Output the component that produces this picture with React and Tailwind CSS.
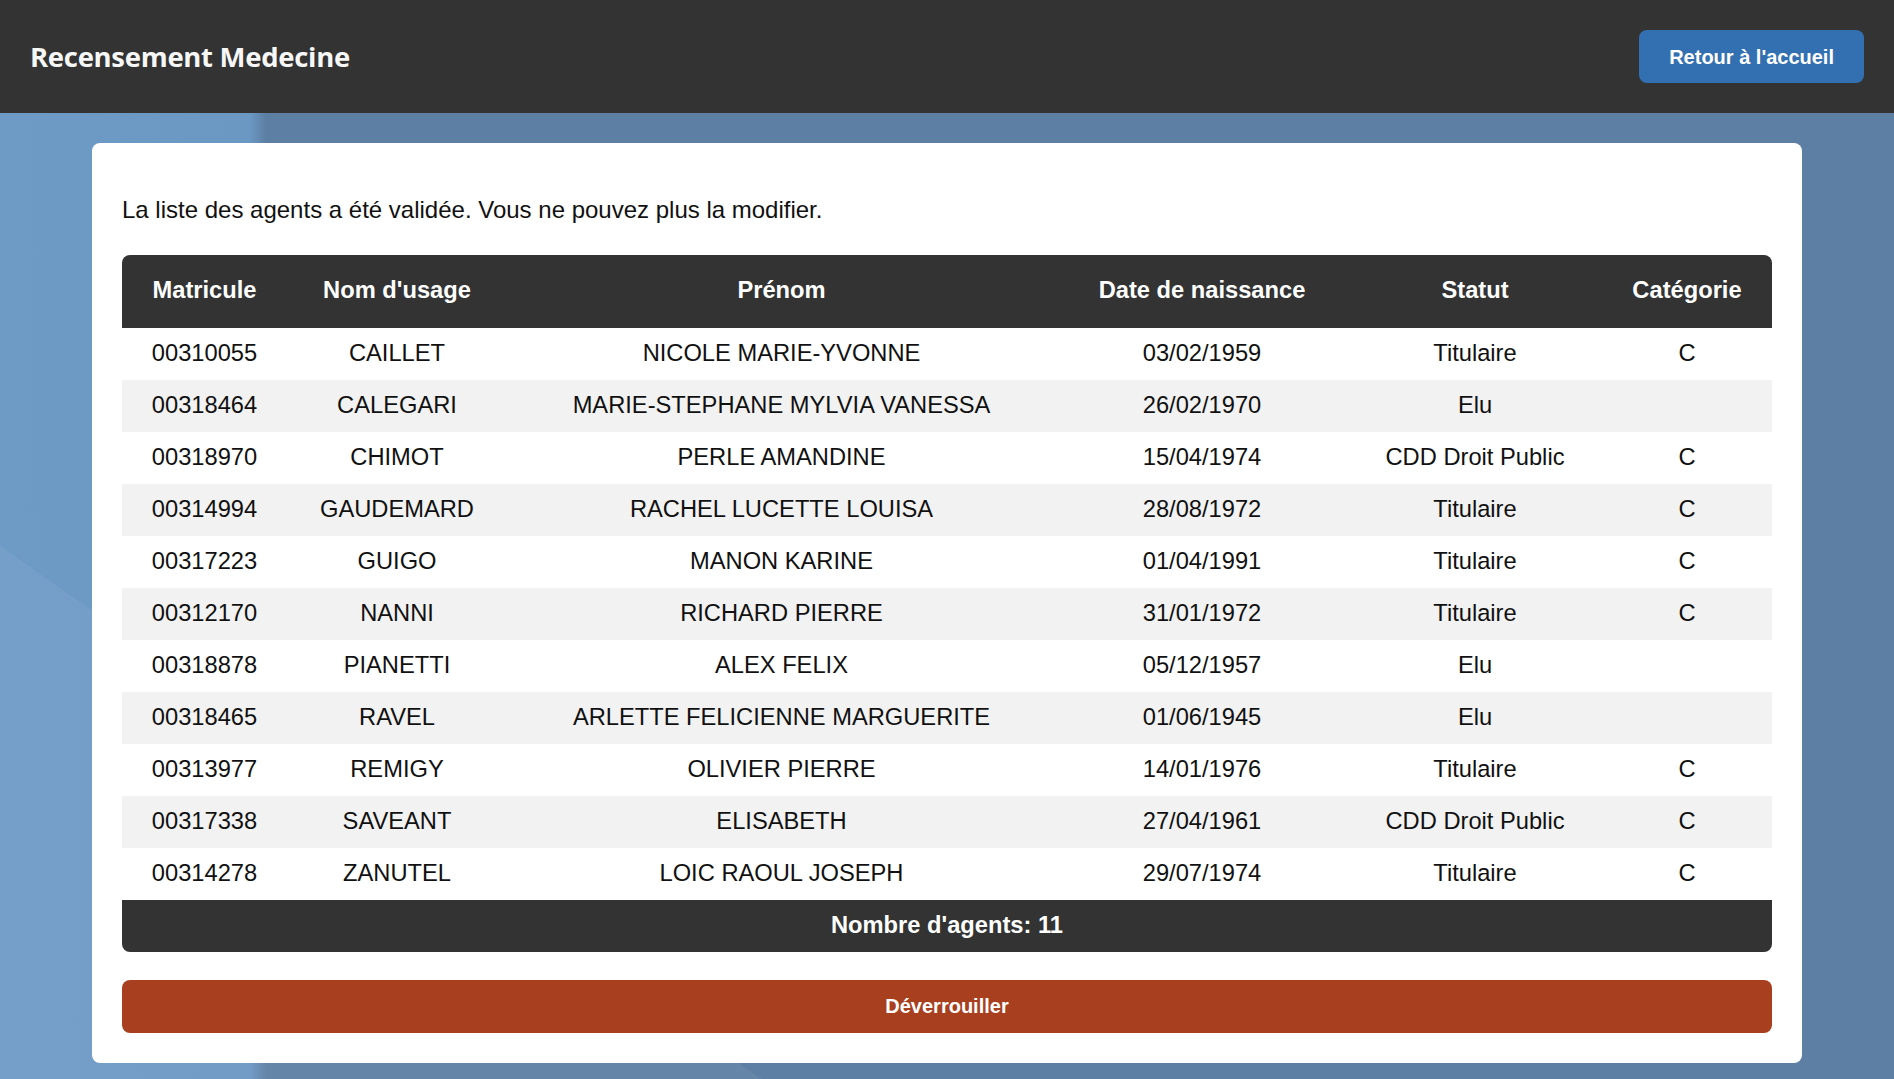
import React from 'react'

const agents = [
  ['00310055', 'CAILLET', 'NICOLE MARIE-YVONNE', '03/02/1959', 'Titulaire', 'C'],
  ['00318464', 'CALEGARI', 'MARIE-STEPHANE MYLVIA VANESSA', '26/02/1970', 'Elu', ''],
  ['00318970', 'CHIMOT', 'PERLE AMANDINE', '15/04/1974', 'CDD Droit Public', 'C'],
  ['00314994', 'GAUDEMARD', 'RACHEL LUCETTE LOUISA', '28/08/1972', 'Titulaire', 'C'],
  ['00317223', 'GUIGO', 'MANON KARINE', '01/04/1991', 'Titulaire', 'C'],
  ['00312170', 'NANNI', 'RICHARD PIERRE', '31/01/1972', 'Titulaire', 'C'],
  ['00318878', 'PIANETTI', 'ALEX FELIX', '05/12/1957', 'Elu', ''],
  ['00318465', 'RAVEL', 'ARLETTE FELICIENNE MARGUERITE', '01/06/1945', 'Elu', ''],
  ['00313977', 'REMIGY', 'OLIVIER PIERRE', '14/01/1976', 'Titulaire', 'C'],
  ['00317338', 'SAVEANT', 'ELISABETH', '27/04/1961', 'CDD Droit Public', 'C'],
  ['00314278', 'ZANUTEL', 'LOIC RAOUL JOSEPH', '29/07/1974', 'Titulaire', 'C']
]

const colonnes = ['Matricule', "Nom d'usage", 'Prénom', 'Date de naissance', 'Statut', 'Catégorie']

const App = () => {
  return (
    <div className="min-h-screen font-['Liberation_Sans',Arial,sans-serif] bg-[#5d7fa3]">
      {/* Barre du haut */}
      <header className="h-[113px] bg-[#333333] px-[30px] flex items-center justify-between">
        <h1 className="font-['Open_Sans',sans-serif] font-bold text-[27.5px] text-[#f7f7f7] tracking-[-0.3px]">
          Recensement Medecine
        </h1>
        <button className="h-[53px] px-[30px] rounded-lg bg-[#3370b2] text-white font-bold text-[20px]">
          Retour à l'accueil
        </button>
      </header>

      {/* Contenu */}
      <main className="pt-[30px] pb-[30px] bg-[linear-gradient(215deg,transparent_1441px,rgba(255,255,255,0.05)_1441px),linear-gradient(to_right,#6e9ac6_0px,#6b97c3_250px,#5d7fa3_266px,#5d7fa3_100%)]">
        <div className="w-[1710px] mx-auto bg-white rounded-lg p-[30px]">
          <p className="mt-[23px] mb-[31px] text-[24px] leading-[1.15] text-[#111]">
            La liste des agents a été validée. Vous ne pouvez plus la modifier.
          </p>

          <div className="rounded-lg overflow-hidden">
            <table className="w-full table-fixed text-[23.7px] leading-[1.15]">
              <colgroup>
                <col className="w-[165px]" />
                <col className="w-[220px]" />
                <col className="w-[549px]" />
                <col className="w-[292px]" />
                <col className="w-[254px]" />
                <col className="w-[170px]" />
              </colgroup>
              <thead>
                <tr className="bg-[#333333] text-white">
                  {colonnes.map((c) => (
                    <th key={c} className="h-[73px] px-2 font-bold text-center">
                      {c}
                    </th>
                  ))}
                </tr>
              </thead>
              <tbody>
                {agents.map((a, i) => (
                  <tr key={a[0]} className={i % 2 === 1 ? 'bg-[#f2f2f2]' : 'bg-white'}>
                    {a.map((v, j) => (
                      <td key={j} className="h-[52px] px-2 text-center text-[#111] whitespace-nowrap">
                        {v}
                      </td>
                    ))}
                  </tr>
                ))}
              </tbody>
            </table>
            <div className="h-[52px] bg-[#333333] text-white font-bold text-[23.7px] flex items-center justify-center">
              Nombre d'agents: 11
            </div>
          </div>

          <button className="mt-[28px] w-full h-[53px] rounded-lg bg-[#a84020] text-white font-bold text-[20px]">
            Déverrouiller
          </button>
        </div>
      </main>
    </div>
  )
}

export default App
